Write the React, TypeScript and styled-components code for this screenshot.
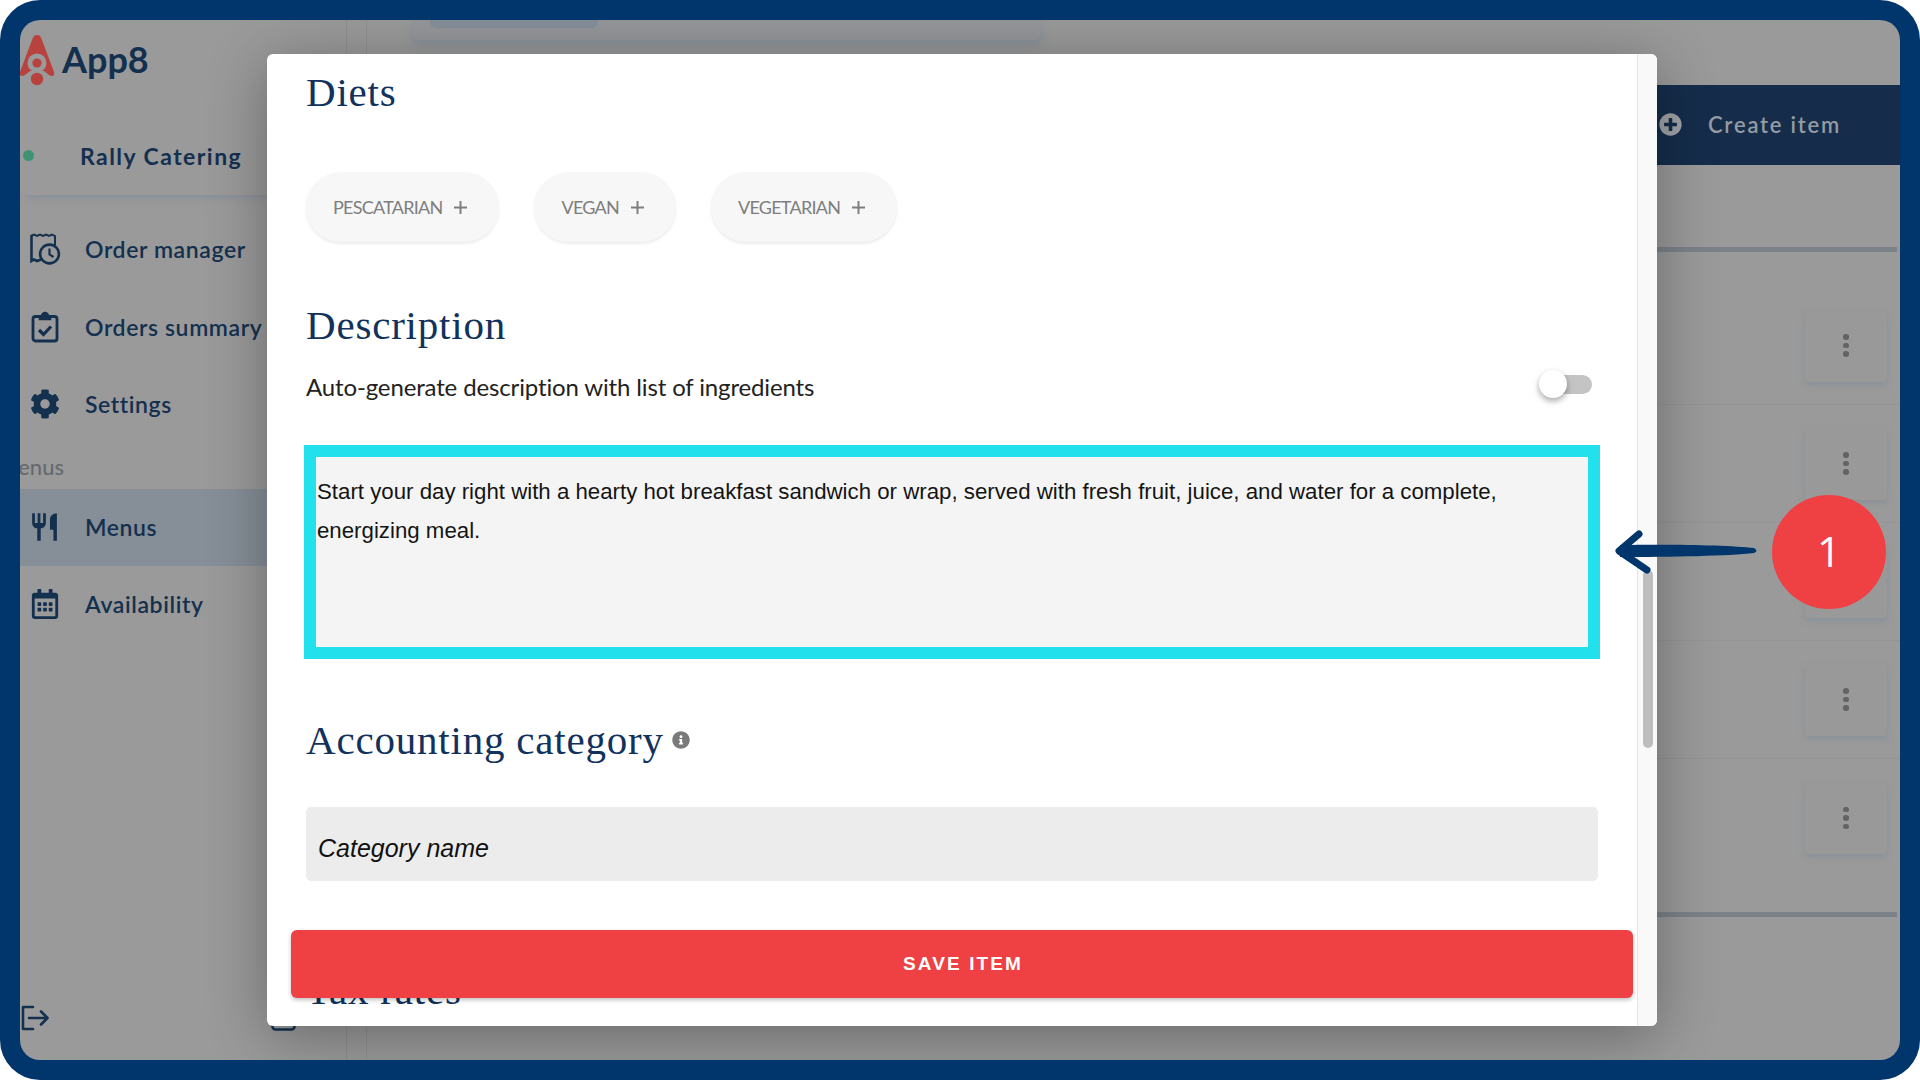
import React from 'react';
import styled, { createGlobalStyle } from 'styled-components';
import { FaCog, FaInfoCircle, FaPlusCircle, FaRegCalendarAlt } from 'react-icons/fa';
import { MdRestaurant } from 'react-icons/md';

const NAVY = '#00366b';
const INK = '#14304f';
const RED = '#ef4044';
const DIM = '#9a9a9a';
const SERIF = '"Liberation Serif", serif';
const SANS = '"Liberation Sans", sans-serif';

const GlobalStyle = createGlobalStyle`
  html, body {
    margin: 0;
    padding: 0;
    background: #ffffff;
  }
  * {
    box-sizing: border-box;
  }
`;

const Frame = styled.div`
  width: 1920px;
  height: 1080px;
  padding: 20px;
  background: ${NAVY};
  border-radius: 40px;
`;

const Screen = styled.div`
  position: relative;
  display: flex;
  width: 100%;
  height: 100%;
  overflow: hidden;
  background: ${DIM};
  border-radius: 20px;
`;

const Sidebar = styled.aside`
  display: flex;
  flex-direction: column;
  flex: none;
  width: 327px;
  color: ${INK};
  border-right: 1px solid #8e8e8e;
`;

const LogoRow = styled.div`
  display: flex;
  align-items: center;
  gap: 7px;
  height: 80px;
  padding-bottom: 3px;
  font: 700 36px Lato, sans-serif;
`;

const ClientRow = styled.div`
  display: flex;
  align-items: center;
  gap: 46px;
  height: 95px;
  margin-bottom: 16px;
  padding: 16px 0 0 3px;
  font: 700 23px Lato, sans-serif;
  letter-spacing: 1.45px;
  box-shadow: 0 8px 8px -6px rgba(120, 135, 150, 0.6);
`;

const StatusDot = styled.span`
  width: 11px;
  height: 11px;
  border-radius: 50%;
  background: #3e9470;
`;

const NavRow = styled.div<{ $active?: boolean }>`
  display: flex;
  align-items: center;
  gap: 24px;
  height: 77.5px;
  padding: 0 0 1px 8px;
  font: 600 23px Lato, sans-serif;
  letter-spacing: 0.6px;
  background: ${({ $active }) => ($active ? '#868e97' : 'transparent')};
`;

const NavIcon = styled.span`
  display: flex;
  align-items: center;
  justify-content: center;
  flex: none;
  width: 33px;
  font-size: 30px;
`;

const SectionLabel = styled.div`
  height: 45px;
  margin-left: -22px;
  color: #666a6e;
  font: 500 22px/45px Lato, sans-serif;
`;

const SidebarFooter = styled.div`
  display: flex;
  align-items: flex-end;
  justify-content: space-between;
  margin-top: auto;
  padding: 0 50px 29px 1px;
`;

const Gutter = styled.div`
  flex: none;
  width: 20px;
  border-right: 1px solid #8f8f8f;
`;

const Main = styled.main`
  display: flex;
  flex-direction: column;
  flex: 1;
`;

const TopCard = styled.div`
  width: 630px;
  height: 20px;
  margin-left: 45px;
  padding-left: 18px;
  background: #95969a;
  border-radius: 0 0 8px 8px;
  box-shadow: 0 6px 10px rgba(120, 135, 150, 0.5);
`;

const TopTab = styled.div`
  width: 168px;
  height: 8px;
  background: #868e9a;
  border-radius: 0 0 6px 6px;
`;

const CreateBar = styled.div`
  display: flex;
  align-items: center;
  align-self: flex-end;
  gap: 26px;
  width: 500px;
  height: 80px;
  margin-top: 45px;
  padding: 0 0 2px 259px;
  color: #959ba2;
  background: #152d4b;
  font: 600 22px Lato, sans-serif;
  letter-spacing: 1.8px;
  svg {
    flex: none;
    font-size: 23px;
    color: #a0a3a6;
  }
`;

const Divider = styled.div<{ $top: number }>`
  height: 5px;
  margin: ${({ $top }) => $top}px 3px 0 0;
  background: #7c8288;
`;

const Rows = styled.div`
  display: flex;
  flex-direction: column;
  margin-top: 35px;
`;

const ItemRow = styled.div`
  display: flex;
  align-items: center;
  justify-content: flex-end;
  height: 118px;
  padding-right: 13px;
  border-bottom: 1px solid #949494;
  &:last-child {
    border-bottom: none;
  }
`;

const KebabCard = styled.div`
  display: flex;
  flex-direction: column;
  align-items: center;
  justify-content: center;
  gap: 3px;
  width: 82px;
  height: 72px;
  background: #999999;
  border-radius: 4px;
  box-shadow: 0 3px 6px rgba(120, 135, 150, 0.45);
`;

const KebabDot = styled.span`
  width: 5.5px;
  height: 5.5px;
  border-radius: 50%;
  background: #636363;
`;

const Modal = styled.div`
  position: absolute;
  top: 34px;
  left: 247px;
  display: flex;
  width: 1390px;
  height: 972px;
  overflow: hidden;
  background: #ffffff;
  border-radius: 6px;
`;

const ModalShadow = styled.div`
  position: absolute;
  top: 34px;
  left: 247px;
  width: 1390px;
  height: 972px;
  border-radius: 6px;
  box-shadow: 0 10px 60px rgba(0, 0, 0, 0.32);
`;

const ModalBody = styled.div`
  flex: 1;
  min-width: 0;
  padding: 13px 39px 0 39px;
`;

const Heading = styled.h2<{ $top?: number }>`
  display: flex;
  align-items: center;
  gap: 8px;
  height: 50px;
  margin: ${({ $top }) => $top ?? 0}px 0 0;
  color: #11325c;
  font: 400 41px/50px ${SERIF};
  letter-spacing: 0.8px;
  svg {
    font-size: 18px;
    color: #7a7a7a;
  }
`;

const ChipRow = styled.div`
  display: flex;
  gap: 35px;
  margin-top: 55px;
`;

const Chip = styled.div`
  display: flex;
  align-items: center;
  gap: 11px;
  height: 70px;
  padding: 0 31px 0 27px;
  color: #7e7e7e;
  background: #f7f7f7;
  border-radius: 35px;
  box-shadow: 0 2px 3px rgba(0, 0, 0, 0.08);
  font: 400 18px Lato, sans-serif;
  letter-spacing: -0.75px;
`;

const ToggleRow = styled.div`
  display: flex;
  align-items: center;
  justify-content: space-between;
  height: 40px;
  margin-top: 16px;
  color: #222222;
  font: 400 24px Lato, sans-serif;
  letter-spacing: -0.14px;
`;

const Toggle = styled.div`
  position: relative;
  width: 52px;
  height: 19px;
  margin-right: 6px;
  margin-top: -3px;
  background: #c4c4c4;
  border-radius: 10px;
`;

const ToggleThumb = styled.span`
  position: absolute;
  top: -5px;
  left: -1px;
  width: 28px;
  height: 28px;
  background: #ffffff;
  border-radius: 50%;
  box-shadow: 0 3px 6px rgba(0, 0, 0, 0.35);
`;

const DescriptionBox = styled.div`
  height: 214px;
  margin: 39px -2px 0 -2px;
  padding: 15px 10px 0 1px;
  color: #141414;
  background: #f4f4f4;
  border: 12px solid #22e0ec;
  font: 400 22.25px/39px ${SANS};
`;

const CategoryField = styled.div`
  display: flex;
  align-items: center;
  height: 74px;
  margin-top: 42px;
  padding: 8px 12px 0;
  color: #111111;
  background: #ececec;
  border-radius: 5px;
  font: italic 400 25px ${SANS};
`;

const ScrollTrack = styled.div`
  flex: none;
  width: 20px;
  padding: 516px 4px 0 5px;
  background: #f9f9f9;
  border-left: 1px solid #e6e6e6;
`;

const ScrollThumb = styled.div`
  height: 178px;
  background: #bdbdbd;
  border-radius: 6px;
`;

const SaveButton = styled.button`
  position: absolute;
  left: 24px;
  right: 24px;
  bottom: 28px;
  height: 68px;
  padding-left: 8px;
  color: #ffffff;
  background: ${RED};
  border: none;
  border-radius: 6px;
  box-shadow: 0 2px 4px rgba(0, 0, 0, 0.25);
  font: 700 19px ${SANS};
  letter-spacing: 2.1px;
`;

const ArrowMark = styled.svg`
  position: absolute;
  top: 505px;
  left: 1590px;
`;

const StepBadge = styled.div`
  position: absolute;
  top: 475px;
  left: 1752px;
  display: flex;
  align-items: center;
  justify-content: center;
  width: 114px;
  height: 114px;
  padding-bottom: 4px;
  color: #ffffff;
  background: ${RED};
  border-radius: 50%;
  font: 400 42px "Open Sans", sans-serif;
`;

const AppLogo = () => (
  <svg width="36" height="52" viewBox="0 0 36 52" style={{ marginLeft: -1, marginTop: 3 }}>
    <path d="M18 1 C21 1 22 3 23 6 L35 38 C36 42 33 43 30 41 L25 37 L11 37 L6 41 C3 43 0 42 1 38 L13 6 C14 3 15 1 18 1 Z" fill="#b8423d" />
    <circle cx="18" cy="29" r="9.5" fill={DIM} />
    <circle cx="18" cy="29" r="4.6" fill="#b8423d" />
    <circle cx="18" cy="45" r="6.2" fill="#b8423d" />
  </svg>
);

const OrderIcon = () => (
  <svg width="32" height="32" viewBox="0 0 32 32" fill="none" stroke={INK} strokeWidth="2.6">
    <path d="M2.5 2 V28 L5 26.5 L8 28 L12 26.5" />
    <path d="M2 3 L5 1.5 L8 3 L11 1.5 L14 3 L17 1.5 L20 3 L23 1.5 L26 3 V12" strokeWidth="2" />
    <circle cx="20.5" cy="21" r="9.4" />
    <path d="M20.5 15.5 V21.5 L24.5 24" strokeWidth="2.2" />
  </svg>
);

const SummaryIcon = () => (
  <svg width="28" height="32" viewBox="0 0 28 32" fill="none" stroke={INK} strokeWidth="2.8">
    <rect x="2" y="5.5" width="24" height="24.5" rx="2.5" />
    <path d="M8.5 5.5 H10.5 C10.8 3 12 1.6 14 1.6 C16 1.6 17.2 3 17.5 5.5 H19.5 V8.5 H8.5 Z" fill={INK} strokeWidth="1.6" />
    <path d="M8 19 L12.5 23.5 L20 15.5" strokeWidth="3.2" />
  </svg>
);

const LogoutIcon = () => (
  <svg width="28" height="26" viewBox="0 0 28 26" fill="none" stroke={INK} strokeWidth="2.6" strokeLinecap="round" strokeLinejoin="round">
    <path d="M12 2 H2 V24 H12" />
    <path d="M8 13 H26 M20 6.5 L26.5 13 L20 19.5" />
  </svg>
);

const BoxIcon = () => (
  <svg width="25" height="28" viewBox="0 0 25 28" fill="none" stroke={INK} strokeWidth="2.6">
    <rect x="1.5" y="1.5" width="22" height="25" rx="3" />
  </svg>
);

const PlusIcon = () => (
  <svg width="15" height="15" viewBox="0 0 15 15" stroke="#7e7e7e" strokeWidth="2">
    <path d="M7.5 1 V14 M1 7.5 H14" />
  </svg>
);

const Kebab = () => (
  <KebabCard>
    <KebabDot />
    <KebabDot />
    <KebabDot />
  </KebabCard>
);

const diets = ['PESCATARIAN', 'VEGAN', 'VEGETARIAN'];

const App: React.FC = () => {
  return (
    <Frame>
      <GlobalStyle />
      <Screen>
        <Sidebar>
          <LogoRow>
            <AppLogo />
            App8
          </LogoRow>
          <ClientRow>
            <StatusDot />
            Rally Catering
          </ClientRow>
          <NavRow>
            <NavIcon><OrderIcon /></NavIcon>
            Order manager
          </NavRow>
          <NavRow>
            <NavIcon><SummaryIcon /></NavIcon>
            Orders summary
          </NavRow>
          <NavRow>
            <NavIcon><FaCog /></NavIcon>
            Settings
          </NavRow>
          <SectionLabel>Menus</SectionLabel>
          <NavRow $active>
            <NavIcon><MdRestaurant size={38} /></NavIcon>
            Menus
          </NavRow>
          <NavRow>
            <NavIcon><FaRegCalendarAlt /></NavIcon>
            Availability
          </NavRow>
          <SidebarFooter>
            <LogoutIcon />
            <BoxIcon />
          </SidebarFooter>
        </Sidebar>
        <Gutter />
        <Main>
          <TopCard>
            <TopTab />
          </TopCard>
          <CreateBar>
            <FaPlusCircle />
            Create item
          </CreateBar>
          <Divider $top={82} />
          <Rows>
            <ItemRow><Kebab /></ItemRow>
            <ItemRow><Kebab /></ItemRow>
            <ItemRow><Kebab /></ItemRow>
            <ItemRow><Kebab /></ItemRow>
            <ItemRow><Kebab /></ItemRow>
          </Rows>
          <Divider $top={35} />
        </Main>
        <ModalShadow />
        <Modal>
          <ModalBody>
            <Heading>Diets</Heading>
            <ChipRow>
              {diets.map((diet) => (
                <Chip key={diet}>
                  {diet}
                  <PlusIcon />
                </Chip>
              ))}
            </ChipRow>
            <Heading $top={58}>Description</Heading>
            <ToggleRow>
              Auto-generate description with list of ingredients
              <Toggle>
                <ToggleThumb />
              </Toggle>
            </ToggleRow>
            <DescriptionBox>
              Start your day right with a hearty hot breakfast sandwich or wrap, served with fresh fruit, juice, and water for a complete, energizing meal.
            </DescriptionBox>
            <Heading $top={56}>
              Accounting category
              <FaInfoCircle />
            </Heading>
            <CategoryField>Category name</CategoryField>
            <Heading $top={84}>Tax rates</Heading>
          </ModalBody>
          <ScrollTrack>
            <ScrollThumb />
          </ScrollTrack>
          <SaveButton>SAVE ITEM</SaveButton>
        </Modal>
        <ArrowMark width="150" height="52" viewBox="0 0 150 52" fill={NAVY}>
          <path d="M10 20 C60 19 120 20 144 23 Q149 26 144 28 C120 31 60 32 10 32 Z" />
          <path d="M29 9 L9 26 L37 45" fill="none" stroke={NAVY} strokeWidth="7" strokeLinecap="round" strokeLinejoin="round" />
        </ArrowMark>
        <StepBadge>1</StepBadge>
      </Screen>
    </Frame>
  );
};

export default App;
